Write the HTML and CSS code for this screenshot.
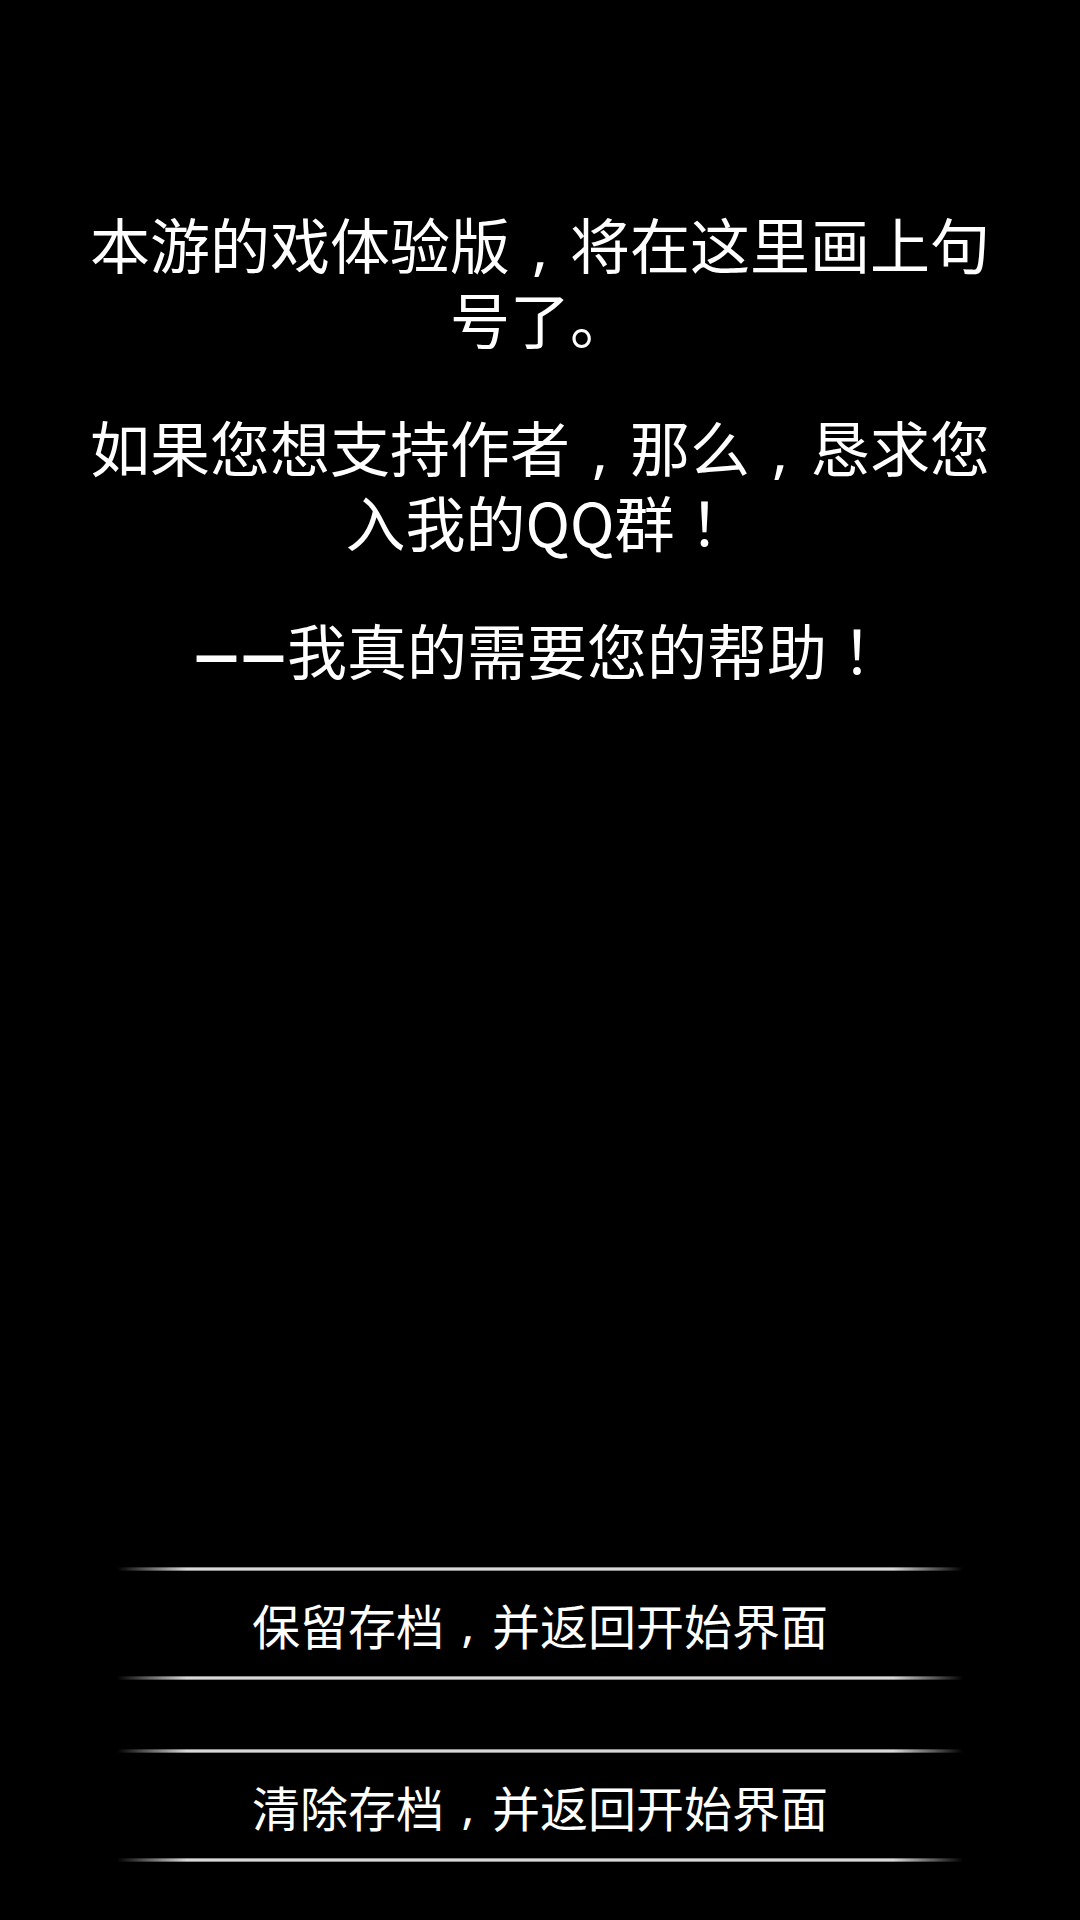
FILE: index.html
```html
<!DOCTYPE html>
<html lang="zh-CN">
<head>
<meta charset="utf-8">
<title>体验版结束</title>
<link rel="stylesheet" href="styles.css">
</head>
<body>
<div class="screen">
  <div class="story">
    <p class="para">本游的戏体验版<span class="cm">,</span>将在这里画上句号了。</p>
    <p class="para">如果您想支持作者<span class="cm">,</span>那么<span class="cm">,</span>恳求您入我的QQ群<span class="ex">！</span></p>
    <p class="para"><span class="dash">—</span><span class="dash">—</span>我真的需要您的帮助<span class="ex">！</span></p>
  </div>
  <div class="actions">
    <div class="btn">保留存档<span class="cm">,</span>并返回开始界面</div>
    <div class="btn">清除存档<span class="cm">,</span>并返回开始界面</div>
  </div>
</div>
</body>
</html>
```

FILE: styles.css
```css
html, body {
  margin: 0;
  padding: 0;
  background: #000;
}
body {
  font-family: "Noto Sans CJK SC", "Noto Sans", sans-serif;
  color: #fff;
}
.screen {
  width: 1080px;
  height: 1920px;
  display: flex;
  flex-direction: column;
  box-sizing: border-box;
}
.story {
  padding: 205px 80px 0;
  display: flex;
  flex-direction: column;
  gap: 53px;
  text-align: center;
}
.para {
  margin: 0;
  font-size: 60px;
  line-height: 75px;
}
.cm {
  display: inline-block;
  width: 1em;
  text-align: center;
  font-family: "Noto Sans", sans-serif;
  line-height: 1;
}
.ex {
  display: inline-block;
  width: 1em;
  text-align: center;
  font-family: "Noto Sans CJK TC", sans-serif;
  line-height: 1;
}
.dash {
  display: inline-block;
  width: 47px;
  text-align: center;
  font-family: "Noto Sans", sans-serif;
  font-size: 43px;
  font-weight: 700;
  line-height: 1;
  vertical-align: 7px;
  transform: scaleY(1.35);
}
.actions {
  margin-top: auto;
  padding: 0 0 58px;
  display: flex;
  flex-direction: column;
  align-items: center;
  gap: 69px;
}
.btn {
  position: relative;
  width: 846px;
  height: 113px;
  display: flex;
  align-items: center;
  justify-content: center;
  font-size: 48px;
  color: #fff;
}
.btn::before, .btn::after {
  content: "";
  position: absolute;
  left: 0;
  right: 0;
  height: 4px;
  background:
    linear-gradient(to right, #000 0, rgba(0,0,0,0) 70px, rgba(0,0,0,0) 776px, #000 846px),
    linear-gradient(to bottom, #666 0, #e0e0e0 40%, #e0e0e0 60%, #666 100%);
}
.btn::before { top: 0; }
.btn::after { bottom: 0; }
```
